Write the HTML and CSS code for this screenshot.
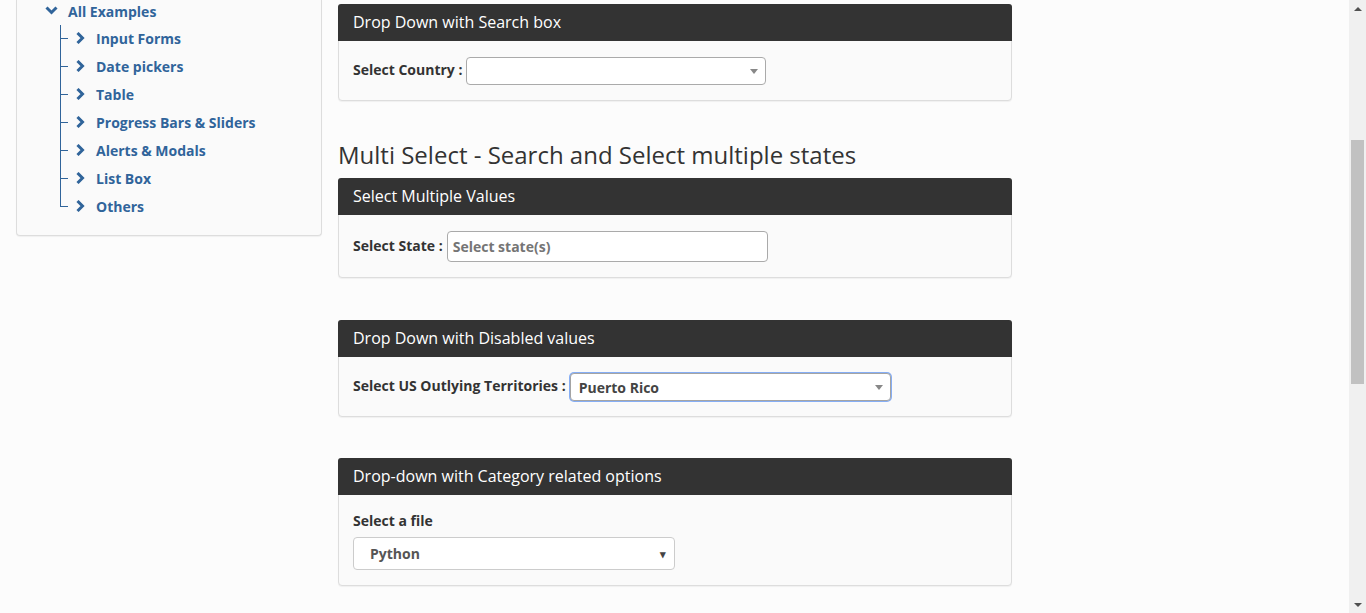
FILE: index.html
```html
<!DOCTYPE html>
<html>
<head>
<meta charset="utf-8">
<title>Select Dropdown List</title>
<link rel="stylesheet" href="styles.css">
</head>
<body>
<div class="viewport">
  <div class="page">
    <aside class="sidebar">
      <div class="tree-root">
        <svg class="chev-down" width="13" height="9" viewBox="0 0 13 9"><polyline points="1.5,1.5 6.5,6.5 11.5,1.5" fill="none" stroke="currentColor" stroke-width="3"/></svg>
        <span>All Examples</span>
      </div>
      <ul class="tree">
        <li><svg class="chev-right" width="9" height="12" viewBox="0 0 9 12"><polyline points="1.5,1 6.5,6 1.5,11" fill="none" stroke="currentColor" stroke-width="3"/></svg><span>Input Forms</span></li>
        <li><svg class="chev-right" width="9" height="12" viewBox="0 0 9 12"><polyline points="1.5,1 6.5,6 1.5,11" fill="none" stroke="currentColor" stroke-width="3"/></svg><span>Date pickers</span></li>
        <li><svg class="chev-right" width="9" height="12" viewBox="0 0 9 12"><polyline points="1.5,1 6.5,6 1.5,11" fill="none" stroke="currentColor" stroke-width="3"/></svg><span>Table</span></li>
        <li><svg class="chev-right" width="9" height="12" viewBox="0 0 9 12"><polyline points="1.5,1 6.5,6 1.5,11" fill="none" stroke="currentColor" stroke-width="3"/></svg><span>Progress Bars &amp; Sliders</span></li>
        <li><svg class="chev-right" width="9" height="12" viewBox="0 0 9 12"><polyline points="1.5,1 6.5,6 1.5,11" fill="none" stroke="currentColor" stroke-width="3"/></svg><span>Alerts &amp; Modals</span></li>
        <li><svg class="chev-right" width="9" height="12" viewBox="0 0 9 12"><polyline points="1.5,1 6.5,6 1.5,11" fill="none" stroke="currentColor" stroke-width="3"/></svg><span>List Box</span></li>
        <li><svg class="chev-right" width="9" height="12" viewBox="0 0 9 12"><polyline points="1.5,1 6.5,6 1.5,11" fill="none" stroke="currentColor" stroke-width="3"/></svg><span>Others</span></li>
      </ul>
    </aside>

    <main class="main">
      <section class="panel">
        <div class="panel-heading">Drop Down with Search box</div>
        <div class="panel-body">
          <span class="label">Select Country :</span>
          <div class="s2 w300"><span class="s2-text"></span><span class="s2-arrow"></span></div>
        </div>
      </section>

      <h3 class="title">Multi Select - Search and Select multiple states</h3>

      <section class="panel">
        <div class="panel-heading">Select Multiple Values</div>
        <div class="panel-body">
          <span class="label">Select State :</span>
          <div class="multi"><span class="placeholder">Select state(s)</span></div>
        </div>
      </section>

      <section class="panel gap-top">
        <div class="panel-heading">Drop Down with Disabled values</div>
        <div class="panel-body">
          <span class="label">Select US Outlying Territories :</span>
          <div class="s2 w321 focus"><span class="s2-text">Puerto Rico</span><span class="s2-arrow"></span></div>
        </div>
      </section>

      <section class="panel gap-top2">
        <div class="panel-heading">Drop-down with Category related options</div>
        <div class="panel-body col">
          <span class="label block">Select a file</span>
          <div class="native"><span>Python</span><span class="native-arrow">▾</span></div>
        </div>
      </section>
    </main>
  </div>

  <div class="scrollbar">
    <div class="sb-up"></div>
    <div class="sb-track"><div class="sb-thumb"></div></div>
    <div class="sb-down"></div>
  </div>
</div>
</body>
</html>
```

FILE: styles.css
```css
* { box-sizing: border-box; }
html, body { margin: 0; padding: 0; }
body {
  font-family: "Open Sans", "Liberation Sans", sans-serif;
  font-size: 14px;
  color: #333;
  background: #fcfcfc;
  height: 613px;
  overflow: hidden;
}
.viewport { display: flex; height: 613px; }
.page {
  flex: 1;
  display: flex;
  align-items: flex-start;
  padding-left: 16px;
  gap: 16px;
}

/* sidebar */
.sidebar {
  width: 306px;
  background: #fafafa;
  border: 1px solid #ddd;
  border-top: none;
  border-radius: 0 0 4px 4px;
  padding: 0 0 15px 28px;
  color: #30649a;
  font-weight: 700;
  box-shadow: 0 1px 1px rgba(0,0,0,0.05);
}
.tree-root {
  height: 22px;
  display: flex;
  align-items: center;
  gap: 10px;
}
.chev-down { display: block; margin-top: -1px; }
.tree { list-style: none; margin: 2px 0 0; padding: 0 0 0 15px; }
.tree li {
  position: relative;
  height: 28px;
  display: flex;
  align-items: center;
  padding-left: 16px;
  gap: 11px;
}
.tree li::before {
  content: "";
  position: absolute;
  left: 0; top: 0; bottom: 0;
  border-left: 1px solid #30649a;
}
.tree li:first-child::before { top: 1px; }
.tree li:last-child::before { bottom: 50%; }
.tree li::after {
  content: "";
  position: absolute;
  left: 0; top: 50%;
  width: 8px;
  border-top: 1px solid #30649a;
}
.chev-right { display: block; }

/* main */
.main { width: 674px; padding-top: 4px; }
.panel {
  background: #fafafa;
  border: 1px solid #ddd;
  border-radius: 4px;
  margin-bottom: 20px;
  box-shadow: 0 1px 1px rgba(0,0,0,0.05);
}
.gap-top { margin-top: 42px; }
.gap-top2 { margin-top: 41px; }
.panel-heading {
  background: #333;
  color: #fff;
  font-size: 16px;
  line-height: 21px;
  padding: 8px 15px;
  margin: -1px -1px 0;
  border-radius: 3px 3px 0 0;
}
.panel-body {
  padding: 16px 14px 15px;
  display: flex;
  align-items: center;
  gap: 3px;
}
.panel-body.col { flex-direction: column; align-items: flex-start; gap: 0; }
.label { font-weight: 700; padding-bottom: 3px; }
.label.block { line-height: 20px; margin-bottom: 6px; padding-bottom: 0; }

.title {
  font-size: 24px;
  font-weight: 400;
  line-height: 26px;
  margin: 41px 0 10px;
  color: #333;
}

/* select2 style */
.s2 {
  position: relative;
  height: 28px;
  background: #fff;
  border: 1px solid #aaa;
  border-radius: 4px;
  display: flex;
  align-items: center;
  padding-left: 8px;
  font-weight: 700;
  color: #444;
}
.w300 { width: 300px; margin-left: 1px; }
.w321 { width: 321px; margin-left: 1px; }
.s2.focus {
  border-color: #a4a4a4;
  box-shadow: 0 0 0 1px #86aef5;
}
.s2-text { flex: 1; padding-top: 1px; }
.s2-arrow {
  width: 0; height: 0;
  margin-right: 7px;
  border-left: 4px solid transparent;
  border-right: 4px solid transparent;
  border-top: 5px solid #888;
}

.multi {
  width: 321px;
  height: 31px;
  margin-left: 1px;
  background: #fff;
  border: 1px solid #aaa;
  border-radius: 4px;
  display: flex;
  align-items: center;
  padding-left: 5px;
}
.placeholder { color: #757575; font-weight: 700; }

.native {
  width: 322px;
  height: 33px;
  background: #fff;
  border: 1px solid #ccc;
  border-radius: 4px;
  display: flex;
  align-items: center;
  justify-content: space-between;
  padding: 0 8px 0 16px;
  font-weight: 700;
  color: #555;
}
.native-arrow { font-size: 11px; color: #444; }

/* scrollbar */
.scrollbar {
  width: 17px;
  height: 613px;
  background: #f0f0f0;
  display: flex;
  flex-direction: column;
}
.sb-up, .sb-down { height: 17px; display: flex; justify-content: center; align-items: center; }
.sb-up::before {
  content: ""; width: 0; height: 0;
  border-left: 4px solid transparent; border-right: 4px solid transparent;
  border-bottom: 4px solid #505050;
}
.sb-down::before {
  content: ""; width: 0; height: 0;
  border-left: 4px solid transparent; border-right: 4px solid transparent;
  border-top: 4px solid #505050;
}
.sb-track { flex: 1; padding: 123px 2px 0; }
.sb-thumb { height: 244px; background: #c1c1c1; }
```
